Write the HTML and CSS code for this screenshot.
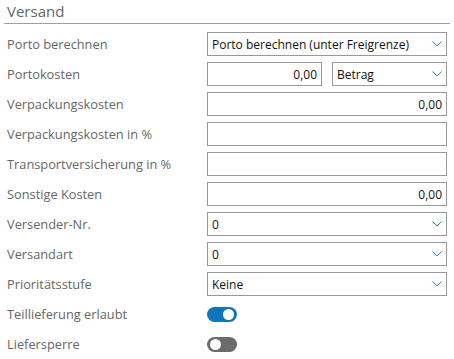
FILE: index.html
```html
<!DOCTYPE html>
<html lang="de">
<head>
  <meta charset="UTF-8" />
  <title>Versand</title>
  <link rel="stylesheet" href="styles.css">
</head>
<body>
  <section class="panel">
    <h2 class="panel-title">Versand</h2>

    <div class="form">
      <label>Porto berechnen</label>
      <div class="field select">
        <span>Porto berechnen (unter Freigrenze)</span>
        <svg class="chev" viewBox="0 0 10 6"><path d="M0.5 0.5 L5 5 L9.5 0.5"/></svg>
      </div>

      <label>Portokosten</label>
      <div class="pair">
        <div class="field num">0,00</div>
        <div class="field select">
          <span>Betrag</span>
          <svg class="chev" viewBox="0 0 10 6"><path d="M0.5 0.5 L5 5 L9.5 0.5"/></svg>
        </div>
      </div>

      <label>Verpackungskosten</label>
      <div class="field num">0,00</div>

      <label>Verpackungskosten in %</label>
      <div class="field"></div>

      <label>Transportversicherung in %</label>
      <div class="field"></div>

      <label>Sonstige Kosten</label>
      <div class="field num">0,00</div>

      <label>Versender-Nr.</label>
      <div class="field select">
        <span>0</span>
        <svg class="chev" viewBox="0 0 10 6"><path d="M0.5 0.5 L5 5 L9.5 0.5"/></svg>
      </div>

      <label>Versandart</label>
      <div class="field select">
        <span>0</span>
        <svg class="chev" viewBox="0 0 10 6"><path d="M0.5 0.5 L5 5 L9.5 0.5"/></svg>
      </div>

      <label>Prioritätsstufe</label>
      <div class="field select">
        <span>Keine</span>
        <svg class="chev" viewBox="0 0 10 6"><path d="M0.5 0.5 L5 5 L9.5 0.5"/></svg>
      </div>

      <label>Teillieferung erlaubt</label>
      <div class="toggle-cell"><span class="toggle on"></span></div>

      <label>Liefersperre</label>
      <div class="toggle-cell"><span class="toggle"></span></div>
    </div>
  </section>
</body>
</html>
```

FILE: styles.css
```css
html, body {
  margin: 0;
  background: #fff;
  font-family: "Open Sans", "Noto Sans", sans-serif;
}

.panel {
  padding: 0 7px;
}

.panel-title {
  margin: 0 -3px;
  padding: 2px 3px 2px;
  height: 19px;
  font-size: 15px;
  font-weight: normal;
  line-height: 19px;
  color: #666;
  border-bottom: 1px solid #a0a0a0;
}

.form {
  margin-top: 8px;
  display: grid;
  grid-template-columns: 200px 1fr;
  grid-auto-rows: 24px;
  row-gap: 6px;
}

.form label {
  display: flex;
  align-items: center;
  font-size: 12.8px;
  color: #666;
}

.field {
  box-sizing: border-box;
  height: 24px;
  border: 1px solid #999;
  background: #fff;
  display: flex;
  align-items: center;
  padding: 0 4px;
  font-size: 12px;
  color: #111;
}

.field.num {
  justify-content: flex-end;
}

.select {
  justify-content: space-between;
  padding-right: 4px;
}

.chev {
  width: 10px;
  height: 6px;
  fill: none;
  stroke: #2b88d8;
  stroke-width: 1;
}

.pair {
  display: grid;
  grid-template-columns: 1fr 1fr;
  column-gap: 10px;
}

.toggle-cell {
  display: flex;
  align-items: center;
}

.toggle {
  position: relative;
  width: 30px;
  height: 15px;
  border-radius: 8px;
  background: #6b6b6b;
}

.toggle::after {
  content: "";
  position: absolute;
  top: 2px;
  left: 3px;
  width: 11px;
  height: 11px;
  border-radius: 50%;
  background: #fff;
}

.toggle.on {
  background: #0f75bc;
}

.toggle.on::after {
  left: 16px;
}
```
